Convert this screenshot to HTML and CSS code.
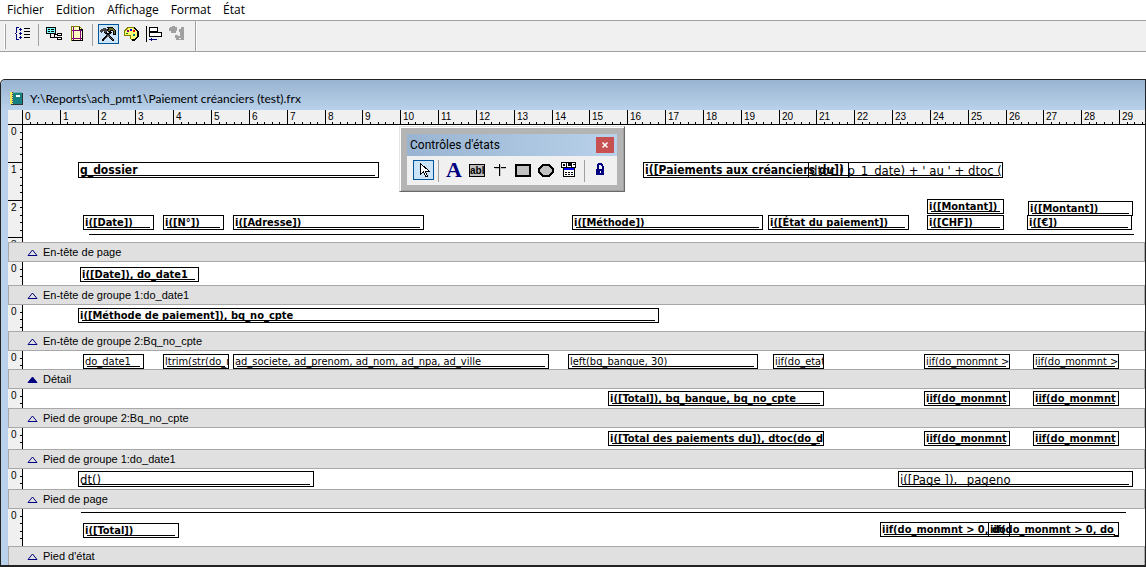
FILE: index.html
```html
<!DOCTYPE html>
<html lang="fr">
<head>
<meta charset="utf-8">
<title>Paiement créanciers (test).frx</title>
<link rel="stylesheet" href="styles.css">
</head>
<body>
<nav class="menubar">
  <button class="menu">Fichier</button>
  <button class="menu">Edition</button>
  <button class="menu">Affichage</button>
  <button class="menu">Format</button>
  <button class="menu">État</button>
</nav>

<div class="toolbar-area">
  <div class="toolbar">
    <span class="grip"></span>
    <button class="tool" aria-label="Ordre de tabulation"><svg class="icon" viewBox="0 0 16 16"><path d="M4 1.500H1.500V6L.5 7.500l1 1.500v4.500H4" fill="none" stroke="#000080"/><path d="M4 3.500h3M4 7.500h3M4 11.500h3M5.500 2v3M5.500 6v3M5.500 10v3" stroke="#000080"/><path d="M9 2.500h6M9 5.500h6M9 8.500h6M9 11.500h6" stroke="#000"/></svg></button>
    <span class="sep"></span>
    <button class="tool" aria-label="Environnement de données"><svg class="icon" viewBox="0 0 16 16"><path d="M.5 1.500h9v6h-9z" fill="#7ff" stroke="#000"/><path d="M2 3.500h2M5 3.500h3M2 5.500h2M5 5.500h3M4.500 8v3.500h6M8.500 11v-2.500h3" stroke="#000" fill="none"/><path d="M11.500 7.500h4v2h-4zM11.500 11.500h4v2h-4z" fill="#fff" stroke="#000"/></svg></button>
    <button class="tool" aria-label="Mise en page"><svg class="icon" viewBox="0 0 16 16"><path d="M2.500 .500h8l3 3v11h-11z" fill="#ffffc0" stroke="#808000"/><path d="M10.500 .500v3h3v11h-11" fill="none" stroke="#000"/><path d="M4.500 1v13M11.500 4v10M3 4.500h10M3 12.500h10" stroke="#800080"/></svg></button>
    <span class="sep"></span>
    <button class="tool active" aria-label="Contrôles d'états"><svg class="icon" viewBox="0 0 16 16"><path d="M5 6l9 9M11 6l-9 9" stroke="#000" stroke-width="2"/><path d="M6 8l7 6M10 8l-6 6" stroke="#bbb" stroke-width=".500"/><path d="M0 6l1-3 3-1 3 1v3L5 7 4 5 2 6v2z" fill="#444"/><path d="M7 1h5l3 3v4h-2V5l-2-1-2 2-2-2 2-1z" fill="#707020" stroke="#000"/></svg></button>
    <button class="tool" aria-label="Palette de couleurs"><svg class="icon" viewBox="0 0 16 16"><path d="M1.500 5L5 1.500h6l3 3.500v6l-3 3H9l-2-2 1-2-2-1-3 1-1.500-1z" fill="#ffff70" stroke="#808000"/><path d="M11 1.500l3.500 3.500v6l-3 3H9" fill="none" stroke="#000" stroke-width="2"/><path d="M4 4h2v2H4z" fill="#800080"/><path d="M7 3h2v2H7z" fill="#00f"/><path d="M10 4h2v2h-2z" fill="#f00"/><path d="M10 8h2v2h-2z" fill="#008080"/><path d="M3 7h2v1H3z" fill="#080"/></svg></button>
    <button class="tool" aria-label="Disposition"><svg class="icon" viewBox="0 0 16 16"><path d="M.5 0v16" stroke="#000"/><path d="M3.500 1.500h8v4h-8zM3.500 6.500h12v4h-12z" fill="#fff" stroke="#000"/><path d="M4 13.500h7" stroke="#000080"/><path d="M3 13.500l3-2v4z" fill="#000080"/></svg></button>
    <button class="tool" aria-label="Grouper" disabled><svg class="icon" viewBox="0 0 16 16"><path d="M1 1h2V0h3v1h2v4H7v2H2V5H0V2h1zM12 1h3v13H7v-2H6V9h3v1h2V6h-1V3h2z" fill="#a0a0a0"/><path d="M9 8.500h2M10 12.500h2" stroke="#f0f0f0"/></svg></button>
  </div>
</div>

<main class="window">
  <header class="titlebar">
    <svg class="icon" viewBox="0 0 16 16"><path d="M2 1h11v12H2z" fill="#188080"/><path d="M1 1h3v12H1z" fill="#f0e860"/><path d="M3.500 1v12" stroke="#446" stroke-dasharray="1 1"/><path d="M4 1h9v1H4z" fill="#70b0b0"/><path d="M7 4h4v2H7z" fill="#fff"/><path d="M2 13.500h11.500V2" fill="none" stroke="#333"/></svg>
    <h1 class="caption">Y:\Reports\ach_pmt1\Paiement créanciers (test).frx</h1>
  </header>
  <div class="designer">
    <svg class="hruler" id="hruler"></svg>

    <section class="band b1">
      <svg class="vruler"></svg>
      <div class="canvas">
        <div class="field large bold dossier">g_dossier</div>
        <div class="field large bold payments">i([Paiements aux créanciers du])</div>
        <div class="field large plain period">dtoc ( p_1_date) + ' au ' + dtoc (</div>
        <div class="field bold amount1">i([Montant])</div>
        <div class="field bold amount2">i([Montant])</div>
        <div class="field bold head hdate">i([Date])</div>
        <div class="field bold head hnum">i([N°])</div>
        <div class="field bold head haddress">i([Adresse])</div>
        <div class="field bold head hmethod">i([Méthode])</div>
        <div class="field bold head hstate">i([État du paiement])</div>
        <div class="field bold head hchf">i([CHF])</div>
        <div class="field bold head heur">i([€])</div>
        <div class="rule rule-head"></div>
      </div>
    </section>
    <div class="bar"><svg class="tri" viewBox="0 0 11 7"><path d="M1 6.500L5.500 1l4.500 5.500z"/></svg>En-tête de page</div>

    <section class="band b2">
      <svg class="vruler"></svg>
      <div class="canvas"><div class="field bold gdate">i([Date]), do_date1</div></div>
    </section>
    <div class="bar"><svg class="tri" viewBox="0 0 11 7"><path d="M1 6.500L5.500 1l4.500 5.500z"/></svg>En-tête de groupe 1:do_date1</div>

    <section class="band b3">
      <svg class="vruler"></svg>
      <div class="canvas"><div class="field bold gmethod">i([Méthode de paiement]), bq_no_cpte</div></div>
    </section>
    <div class="bar"><svg class="tri" viewBox="0 0 11 7"><path d="M1 6.500L5.500 1l4.500 5.500z"/></svg>En-tête de groupe 2:Bq_no_cpte</div>

    <section class="band b4">
      <svg class="vruler"></svg>
      <div class="canvas">
        <div class="field detail ddate">do_date1</div>
        <div class="field detail dnum">ltrim(str(do_n</div>
        <div class="field detail daddress">ad_societe, ad_prenom, ad_nom, ad_npa, ad_ville</div>
        <div class="field detail dbank">left(bq_banque, 30)</div>
        <div class="field detail dstate">iif(do_etat</div>
        <div class="field detail col-chf">iif(do_monmnt &gt; 0</div>
        <div class="field detail col-eur">iif(do_monmnt &gt; 0</div>
      </div>
    </section>
    <div class="bar"><svg class="tri solid" viewBox="0 0 11 7"><path d="M1 6.500L5.500 1l4.500 5.500z"/></svg>Détail</div>

    <section class="band b5">
      <svg class="vruler"></svg>
      <div class="canvas">
        <div class="field bold total sum2">i([Total]), bq_banque, bq_no_cpte</div>
        <div class="field bold col-chf sum2">iif(do_monmnt</div>
        <div class="field bold col-eur sum2">iif(do_monmnt</div>
      </div>
    </section>
    <div class="bar"><svg class="tri" viewBox="0 0 11 7"><path d="M1 6.500L5.500 1l4.500 5.500z"/></svg>Pied de groupe 2:Bq_no_cpte</div>

    <section class="band b6">
      <svg class="vruler"></svg>
      <div class="canvas">
        <div class="field bold total sum1">i([Total des paiements du]), dtoc(do_d</div>
        <div class="field bold col-chf sum1">iif(do_monmnt</div>
        <div class="field bold col-eur sum1">iif(do_monmnt</div>
      </div>
    </section>
    <div class="bar"><svg class="tri" viewBox="0 0 11 7"><path d="M1 6.500L5.500 1l4.500 5.500z"/></svg>Pied de groupe 1:do_date1</div>

    <section class="band b7">
      <svg class="vruler"></svg>
      <div class="canvas">
        <div class="field large plain now">dt()</div>
        <div class="field large plain pageno">i([Page ]), _pageno</div>
      </div>
    </section>
    <div class="bar"><svg class="tri" viewBox="0 0 11 7"><path d="M1 6.500L5.500 1l4.500 5.500z"/></svg>Pied de page</div>

    <section class="band b8">
      <svg class="vruler"></svg>
      <div class="canvas">
        <div class="rule rule-foot"></div>
        <div class="field bold gtotal">i([Total])</div>
        <div class="field bold gsum1">iif(do_monmnt &gt; 0, do</div>
        <div class="field bold gsum2">iif(do_monmnt &gt; 0, do_</div>
      </div>
    </section>
    <div class="bar"><svg class="tri" viewBox="0 0 11 7"><path d="M1 6.500L5.500 1l4.500 5.500z"/></svg>Pied d'état</div>
  </div>
</main>

<aside class="palette">
  <div class="palette-title"><span>Contrôles d'états</span><button class="close" aria-label="Fermer"><svg viewBox="0 0 8 8"><path d="M1.500 1.500l5 5M6.500 1.500l-5 5" stroke="#fff" stroke-width="1.500"/></svg></button></div>
  <div class="palette-tools">
    <button class="tool active" aria-label="Sélection"><svg class="icon" viewBox="0 0 16 16"><path d="M5.500 1.500v11l3-3 2 5h2l-2-5h4z" fill="#fff" stroke="#000"/></svg></button>
    <span class="sep"></span>
    <button class="tool glyph-a">A</button>
    <button class="tool" aria-label="Champ"><span class="abl">abl</span></button>
    <button class="tool" aria-label="Ligne"><svg class="icon" viewBox="0 0 16 16"><path d="M2 5.500h12M7.500 2v12" stroke="#000"/><path d="M3 6.500h4M9 6.500h5M8.500 3v11" stroke="#c0c0c0"/></svg></button>
    <button class="tool" aria-label="Rectangle"><svg class="icon" viewBox="0 0 16 16"><path d="M1 3h14v11H1z" fill="#c0c0c0" stroke="#000" stroke-width="2"/></svg></button>
    <button class="tool" aria-label="Rectangle arrondi"><svg class="icon" viewBox="0 0 16 16"><path d="M5 3h6l4 4v3l-4 4H5l-4-4V7z" fill="#c0c0c0" stroke="#000" stroke-width="2"/></svg></button>
    <button class="tool" aria-label="OLE"><svg class="icon" viewBox="0 0 16 16"><path d="M0 0h15v6H0z"/><path d="M1.500 1.500h3v3h-3zM6.500 1v3.500h3M14 1.500h-2.500v3H14M12 3h2" fill="none" stroke="#fff"/><path d="M2.500 6.500h11v8h-11z" fill="#fff" stroke="#000"/><path d="M3 6h10v2H3z" fill="#00f"/><path d="M4 10.500h8M4 12.500h8" stroke="#000" stroke-dasharray="2 1"/></svg></button>
    <span class="sep"></span>
    <button class="tool" aria-label="Verrouiller"><svg class="icon" viewBox="0 0 16 16"><path d="M5.500 7V4l1.500-2h2l1.500 2v3" fill="none" stroke="#000080" stroke-width="2"/><path d="M4 7h8v6H4z" fill="#000080"/><path d="M8.500 9v2" stroke="#fff"/></svg></button>
  </div>
</aside>
<script src="rulers.js"></script>
</body>
</html>
```
FILE: styles.css
```css
* { box-sizing: border-box; }
body {
  margin: 0;
  min-height: 100vh;
  display: flex;
  flex-direction: column;
  overflow: hidden;
  background: #fff;
  color: #000;
  font: 12px/16px "Open Sans", "Noto Sans", sans-serif;
}
button { margin: 0; padding: 0; border: 0; background: none; color: inherit; font: inherit; }
svg { display: block; }

.menubar { display: flex; gap: 10px; height: 20px; padding: 0 6px; align-items: center; }
.menu { padding: 0 1px; }

.toolbar-area {
  display: flex;
  height: 32px;
  margin-bottom: 27px;
  background: #f0f0f0;
  border-top: 1px solid #a0a0a0;
  border-bottom: 1px solid #a0a0a0;
}
.toolbar {
  display: flex;
  gap: 2px;
  align-items: flex-start;
  padding: 3px 7px 0 4px;
  border-right: 1px solid #a0a0a0;
  box-shadow: 1px 0 #fff;
}
.grip { width: 2px; height: 25px; margin-right: 5px; border-right: 1px solid #a0a0a0; border-left: 1px solid #fff; }
.tool { display: flex; width: 21px; height: 20px; padding-right: 1px; align-items: center; justify-content: center; }
.tool.active { background: #cce4f7; border: 1px solid #00549a; }
.icon { flex: none; width: 16px; height: 16px; shape-rendering: crispEdges; }
.sep { width: 1px; height: 22px; margin: 0 3px 0 2px; background: #a0a0a0; }

.window {
  flex: 1;
  padding: 0 0 0 7px;
  background: #b9d1ea;
  border: solid #222;
  border-width: 1px 1px 2px 1px;
  border-radius: 5px 0 0 0;
}
.titlebar {
  display: flex;
  align-items: center;
  gap: 5px;
  height: 30px;
  margin-left: -7px;
  padding: 7px 8px 0 8px;
  background: linear-gradient(#99b4d1, #b9d1ea);
  border-radius: 5px 0 0 0;
}
.caption { margin: 0; font: 400 12px/16px Lato, "Open Sans", sans-serif; }
.hruler { width: 100%; height: 15px; background: #f0f0f0; border-bottom: 1px solid #000; }
.hruler text, .vruler text { font: 10px "Liberation Sans", sans-serif; }
.hruler path, .vruler path { stroke: #000; fill: none; shape-rendering: crispEdges; }
.band { display: flex; background: #fff; }
.vruler { flex: none; width: 15px; height: 100%; background: #f0f0f0; border-right: 1px solid #000; }
.canvas { position: relative; flex: 1; }
.b1 { height: 117px; }
.b2 { height: 23px; }
.b3 { height: 26px; }
.b4 { height: 18px; }
.b5 { height: 19px; }
.b6 { height: 21px; }
.b7 { height: 20px; }
.b8 { height: 37px; }
.bar {
  display: flex;
  align-items: center;
  gap: 5px;
  height: 20px;
  padding-left: 18px;
  background: #e0e0e0;
  border: 1px solid #a8a8a8;
  font: 11px/16px "Liberation Sans", sans-serif;
}
.bar:last-child { height: 19px; border-bottom: 0; }
.tri { width: 11px; height: 7px; }
.tri path { fill: none; stroke: #000080; }
.tri.solid path { fill: #000080; }

/* Report objects: positions are the layout saved in the report */
.field {
  position: absolute;
  height: 15px;
  padding-left: 1px;
  border: 1px solid #000;
  overflow: hidden;
  white-space: pre;
  font: 11px/14px "DejaVu Sans Condensed", sans-serif;
}
.field::after { content: ""; position: absolute; left: 3px; right: 3px; bottom: 1px; height: 1px; background: #000; }
.field.large { height: 16px; font-size: 12px; line-height: 15px; }
.field.plain { font-size: 13px; }
.field.bold { font-weight: 700; }
.rule { position: absolute; height: 1px; background: #000; }

.dossier { left: 55px; top: 37px; width: 301px; }
.payments { left: 620px; top: 37px; width: 206px; }
.period { left: 785px; top: 37px; width: 195px; }
.amount1 { left: 904px; top: 74px; width: 77px; }
.amount2 { left: 1005px; top: 76px; width: 105px; }
.head { top: 90px; }
.hdate { left: 60px; width: 71px; }
.hnum { left: 140px; width: 61px; }
.haddress { left: 210px; width: 191px; }
.hmethod { left: 549px; width: 191px; }
.hstate { left: 745px; width: 141px; }
.hchf { left: 904px; width: 77px; }
.heur { left: 1004px; width: 105px; }
.rule-head { left: 66px; top: 109px; width: 1045px; }
.gdate { left: 57px; top: 5px; width: 119px; }
.gmethod { left: 55px; top: 3px; width: 581px; }
.detail { top: 3px; }
.ddate { left: 60px; width: 61px; }
.dnum { left: 140px; width: 66px; }
.daddress { left: 210px; width: 316px; }
.dbank { left: 545px; width: 190px; }
.dstate { left: 750px; width: 51px; }
.col-chf { left: 901px; width: 86px; }
.col-eur { left: 1010px; width: 86px; }
.total { left: 585px; width: 216px; }
.sum2 { top: 2px; }
.sum1 { top: 3px; }
.now { left: 55px; top: 2px; width: 236px; }
.pageno { left: 875px; top: 2px; width: 235px; }
.rule-foot { left: 58px; top: 3px; width: 1045px; }
.gtotal { left: 60px; top: 14px; width: 96px; }
.gsum1 { left: 857px; top: 13px; width: 130px; }
.gsum2 { left: 965px; top: 13px; width: 131px; }

/* Floating palette over the designer */
.palette {
  position: absolute;
  left: 399px;
  top: 126px;
  width: 226px;
  padding: 6px;
  background: #b4b4b4;
  border: 1px solid;
  border-color: #e3e3e3 #696969 #696969 #e3e3e3;
  box-shadow: inset 1px 1px #fff, inset -1px -1px #a0a0a0;
}
.palette-title {
  display: flex;
  align-items: center;
  justify-content: space-between;
  height: 22px;
  padding: 0 3px;
  margin: 1px 1px 0;
  background: linear-gradient(90deg, #99b4d1, #b9d1ea);
  font: 12px/16px Roboto, "Open Sans", sans-serif;
}
.close { display: flex; width: 18px; height: 16px; align-items: center; justify-content: center; background: #c75050; }
.close svg { width: 8px; height: 8px; }
.palette-tools { display: flex; gap: 2px; height: 29px; margin: 0 1px; padding: 4px 6px 0; background: #f0f0f0; }
.glyph-a { color: #000080; font: 700 22px/20px "Liberation Serif", serif; }
.abl {
  width: 16px;
  height: 13px;
  background: #c0c0c0;
  border: 1px solid #000;
  font: 700 10px/11px "Liberation Sans", sans-serif;
}
```
FILE: rulers.js
```js
// Both rulers are graduated in centimetres, with five divisions each.
const PX_PER_CM = 37.83;

function graduate(svg, length, origin, place) {
  let d = "";
  let labels = "";
  for (let i = 0; ; i++) {
    const at = Math.round(origin + (i * PX_PER_CM) / 5);
    if (at >= length) break;
    d += place.tick(at, i % 5 === 0, i);
    if (i % 5 === 0) labels += place.label(at, i / 5);
  }
  svg.innerHTML = `<path d="${d}"/>${labels}`;
}

const hruler = document.getElementById("hruler");
graduate(hruler, hruler.clientWidth, 14, {
  tick: (x, major) => `M${x + 0.5} ${major ? 0 : 12}V14`,
  label: (x, n) => `<text x="${x + 3}" y="10">${n}</text>`,
});

document.querySelectorAll(".vruler").forEach((ruler) => {
  graduate(ruler, ruler.getBoundingClientRect().height, 0, {
    tick: (y, major, i) => (i === 0 ? "" : `M${major ? 0 : 12} ${y - 0.5}H14`),
    label: (y, n) => `<text x="3" y="${y + 10}">${n}</text>`,
  });
});
```
